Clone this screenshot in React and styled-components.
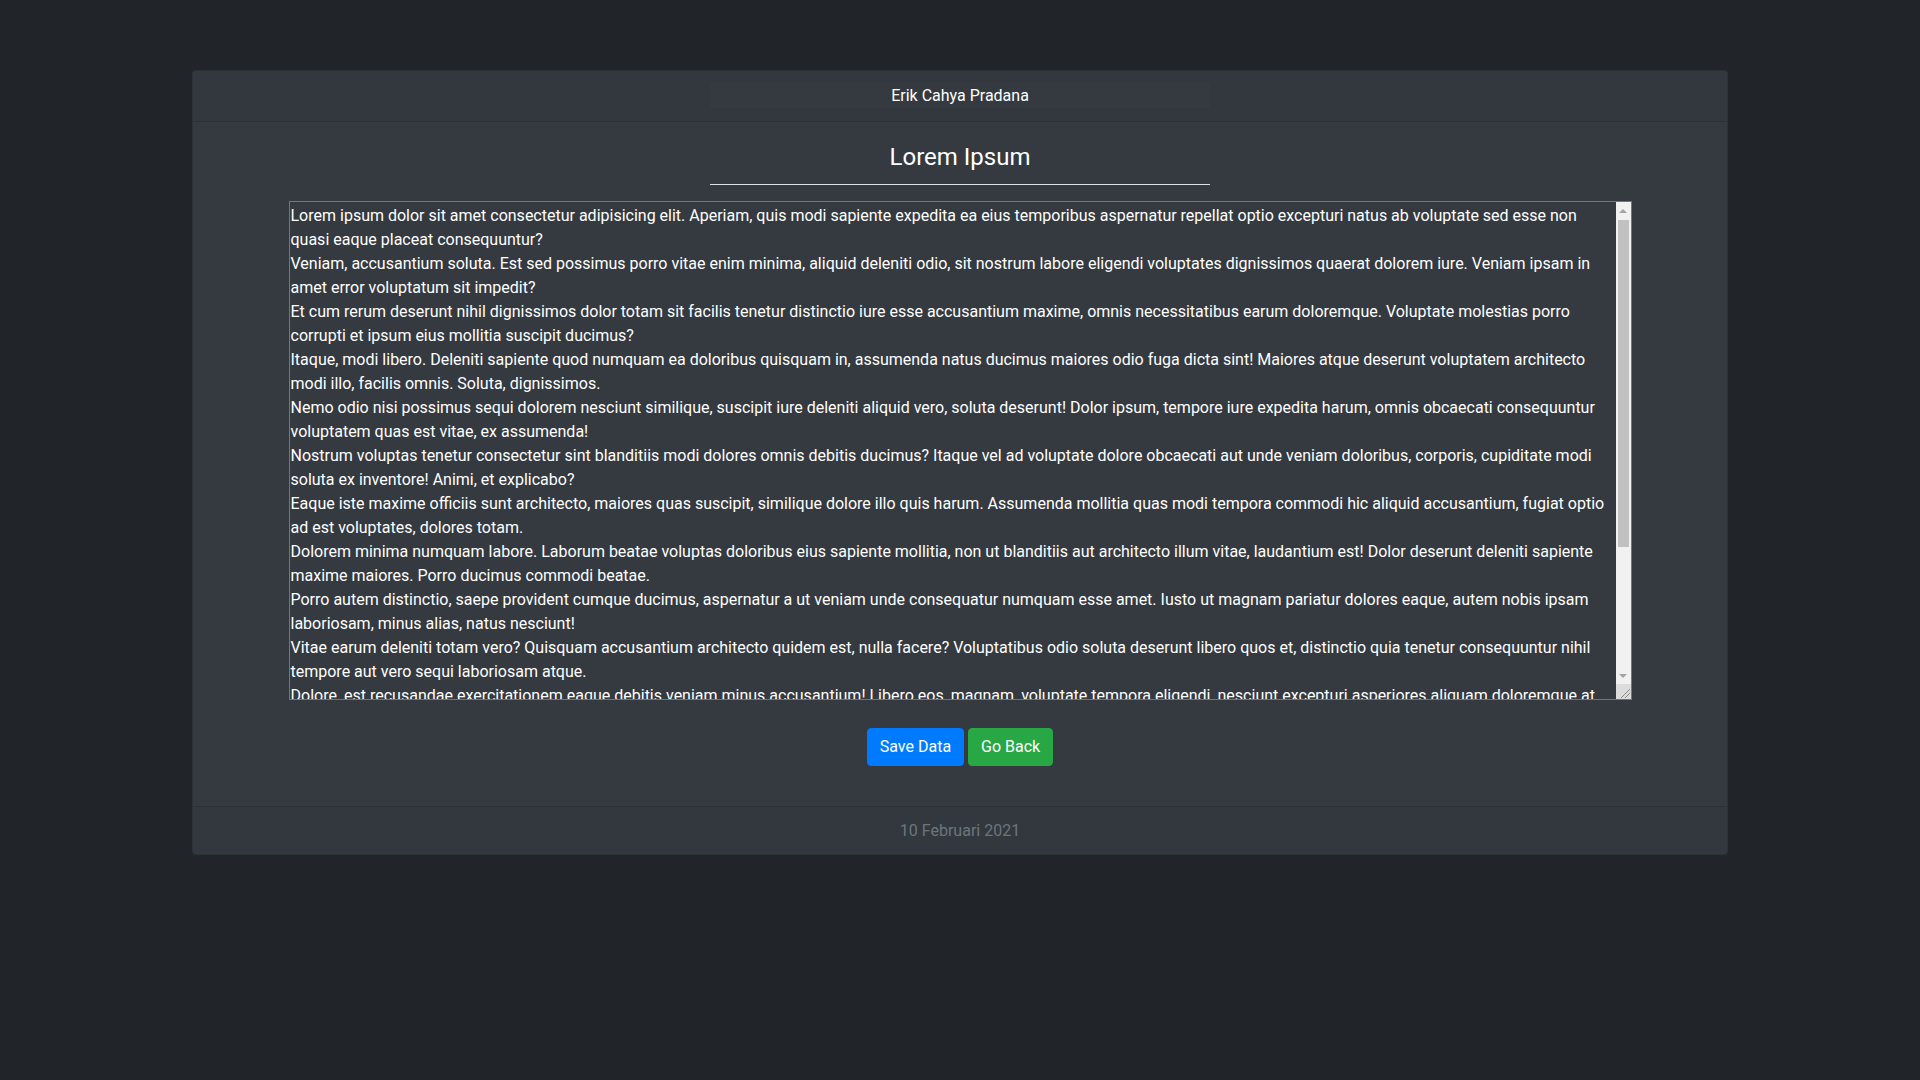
import React from "react";
import styled, { createGlobalStyle } from "styled-components";

const GlobalStyle = createGlobalStyle`
  html, body {
    margin: 0;
    padding: 0;
    background: #212529;
    font-family: Roboto, "Liberation Sans", sans-serif;
    font-size: 16px;
    color: #fff;
  }
`;

const Page = styled.div`
  min-height: 1080px;
  padding-top: 70px;
  box-sizing: border-box;
`;

const Card = styled.div`
  width: 1536px;
  margin: 0 auto;
  background: #343a40;
  border: 1px solid rgba(0, 0, 0, 0.125);
  border-radius: 4px;
  box-sizing: border-box;
  overflow: hidden;
`;

const CardHeader = styled.div`
  padding: 12px 20px 13px;
  background: rgba(0, 0, 0, 0.03);
  border-bottom: 1px solid rgba(0, 0, 0, 0.125);
  display: flex;
  justify-content: center;
`;

const Author = styled.div`
  width: 500px;
  height: 25px;
  line-height: 25px;
  background: #343a40;
  text-align: center;
  font-size: 16px;
  color: #fff;
`;

const CardBody = styled.div`
  padding: 21px 20px 40px;
  display: flex;
  flex-direction: column;
  align-items: center;
`;

const Title = styled.h4`
  margin: 0;
  width: 500px;
  font-size: 24px;
  font-weight: 400;
  line-height: 29px;
  text-align: center;
  padding-bottom: 12px;
  border-bottom: 1px solid #dee2e6;
`;

const Field = styled.div`
  margin-top: 16px;
  width: 1343px;
  height: 499px;
  box-sizing: border-box;
  border: 1px solid #767676;
  display: flex;
`;

const Content = styled.textarea`
  flex: 1;
  height: 100%;
  box-sizing: border-box;
  margin: 0;
  padding: 2px 2px 2px 1px;
  border: 0;
  background: transparent;
  color: #fff;
  font-family: Roboto, "Liberation Sans", sans-serif;
  font-size: 16px;
  line-height: 24px;
  outline: none;
  resize: none;
  overflow: hidden;
`;

const Scrollbar = styled.div`
  width: 15px;
  display: flex;
  flex-direction: column;
  background: #f1f1f1;
`;

const ScrollButton = styled.div`
  height: 17px;
  display: flex;
  align-items: center;
  justify-content: center;
`;

const Track = styled.div`
  flex: 1;
  padding: 1px 2px;
`;

const Thumb = styled.div`
  height: 327px;
  background: #c1c1c1;
`;

const Corner = styled.div`
  height: 15px;
  background: #dcdcdc;
  display: flex;
  align-items: flex-end;
  justify-content: flex-end;
`;

const Actions = styled.div`
  margin-top: 28px;
  display: flex;
  gap: 4px;
`;

const Button = styled.button`
  padding: 6px 12px;
  font-family: Roboto, "Liberation Sans", sans-serif;
  font-size: 16px;
  line-height: 24px;
  color: #fff;
  border: 1px solid ${(p) => p.$color};
  background: ${(p) => p.$color};
  border-radius: 4px;
  cursor: pointer;
`;

const CardFooter = styled.div`
  padding: 12px 20px 11px;
  background: rgba(0, 0, 0, 0.03);
  border-top: 1px solid rgba(0, 0, 0, 0.125);
  text-align: center;
  line-height: 24px;
  color: #6c757d;
`;

const text = [
  "Lorem ipsum dolor sit amet consectetur adipisicing elit. Aperiam, quis modi sapiente expedita ea eius temporibus aspernatur repellat optio excepturi natus ab voluptate sed esse non quasi eaque placeat consequuntur?",
  "Veniam, accusantium soluta. Est sed possimus porro vitae enim minima, aliquid deleniti odio, sit nostrum labore eligendi voluptates dignissimos quaerat dolorem iure. Veniam ipsam in amet error voluptatum sit impedit?",
  "Et cum rerum deserunt nihil dignissimos dolor totam sit facilis tenetur distinctio iure esse accusantium maxime, omnis necessitatibus earum doloremque. Voluptate molestias porro corrupti et ipsum eius mollitia suscipit ducimus?",
  "Itaque, modi libero. Deleniti sapiente quod numquam ea doloribus quisquam in, assumenda natus ducimus maiores odio fuga dicta sint! Maiores atque deserunt voluptatem architecto modi illo, facilis omnis. Soluta, dignissimos.",
  "Nemo odio nisi possimus sequi dolorem nesciunt similique, suscipit iure deleniti aliquid vero, soluta deserunt! Dolor ipsum, tempore iure expedita harum, omnis obcaecati consequuntur voluptatem quas est vitae, ex assumenda!",
  "Nostrum voluptas tenetur consectetur sint blanditiis modi dolores omnis debitis ducimus? Itaque vel ad voluptate dolore obcaecati aut unde veniam doloribus, corporis, cupiditate modi soluta ex inventore! Animi, et explicabo?",
  "Eaque iste maxime officiis sunt architecto, maiores quas suscipit, similique dolore illo quis harum. Assumenda mollitia quas modi tempora commodi hic aliquid accusantium, fugiat optio ad est voluptates, dolores totam.",
  "Dolorem minima numquam labore. Laborum beatae voluptas doloribus eius sapiente mollitia, non ut blanditiis aut architecto illum vitae, laudantium est! Dolor deserunt deleniti sapiente maxime maiores. Porro ducimus commodi beatae.",
  "Porro autem distinctio, saepe provident cumque ducimus, aspernatur a ut veniam unde consequatur numquam esse amet. Iusto ut magnam pariatur dolores eaque, autem nobis ipsam laboriosam, minus alias, natus nesciunt!",
  "Vitae earum deleniti totam vero? Quisquam accusantium architecto quidem est, nulla facere? Voluptatibus odio soluta deserunt libero quos et, distinctio quia tenetur consequuntur nihil tempore aut vero sequi laboriosam atque.",
  "Dolore, est recusandae exercitationem eaque debitis veniam minus accusantium! Libero eos, magnam, voluptate tempora eligendi, nesciunt excepturi asperiores aliquam doloremque at quas, fugit sint. Minima, repellendus quod.",
  "Quibusdam, laudantium. Sapiente ipsam nesciunt ullam, quae aliquid impedit fugiat repellat autem commodi dolorum, quasi ex voluptatum natus officia nisi sunt? Molestias tempora corporis, nam quisquam ducimus quo.",
  "Ad, quas delectus. Tempora necessitatibus dolore at nihil esse, molestiae voluptatibus ipsum beatae suscipit, quidem repudiandae vero maiores optio recusandae, deserunt accusamus rerum sed omnis ipsa veniam harum.",
].join("\n");

const Arrow = ({ up }) => (
  <svg width="8" height="4" viewBox="0 0 8 4">
    <path d={up ? "M0 4 L4 0 L8 4 Z" : "M0 0 L4 4 L8 0 Z"} fill="#a3a3a3" />
  </svg>
);

const Grip = () => (
  <svg width="11" height="11" viewBox="0 0 11 11">
    <path d="M1 10 L10 1 M5 10 L10 5" stroke="#8a8a8a" strokeWidth="1" fill="none" />
  </svg>
);

const App = () => {
  return (
    <Page>
      <GlobalStyle />
      <Card>
        <CardHeader>
          <Author>Erik Cahya Pradana</Author>
        </CardHeader>
        <CardBody>
          <Title>Lorem Ipsum</Title>
          <Field>
            <Content defaultValue={text} spellCheck={false} />
            <Scrollbar>
              <ScrollButton>
                <Arrow up />
              </ScrollButton>
              <Track>
                <Thumb />
              </Track>
              <ScrollButton>
                <Arrow />
              </ScrollButton>
              <Corner>
                <Grip />
              </Corner>
            </Scrollbar>
          </Field>
          <Actions>
            <Button $color="#007bff">Save Data</Button>
            <Button $color="#28a745">Go Back</Button>
          </Actions>
        </CardBody>
        <CardFooter>10 Februari 2021</CardFooter>
      </Card>
    </Page>
  );
};

export default App;
